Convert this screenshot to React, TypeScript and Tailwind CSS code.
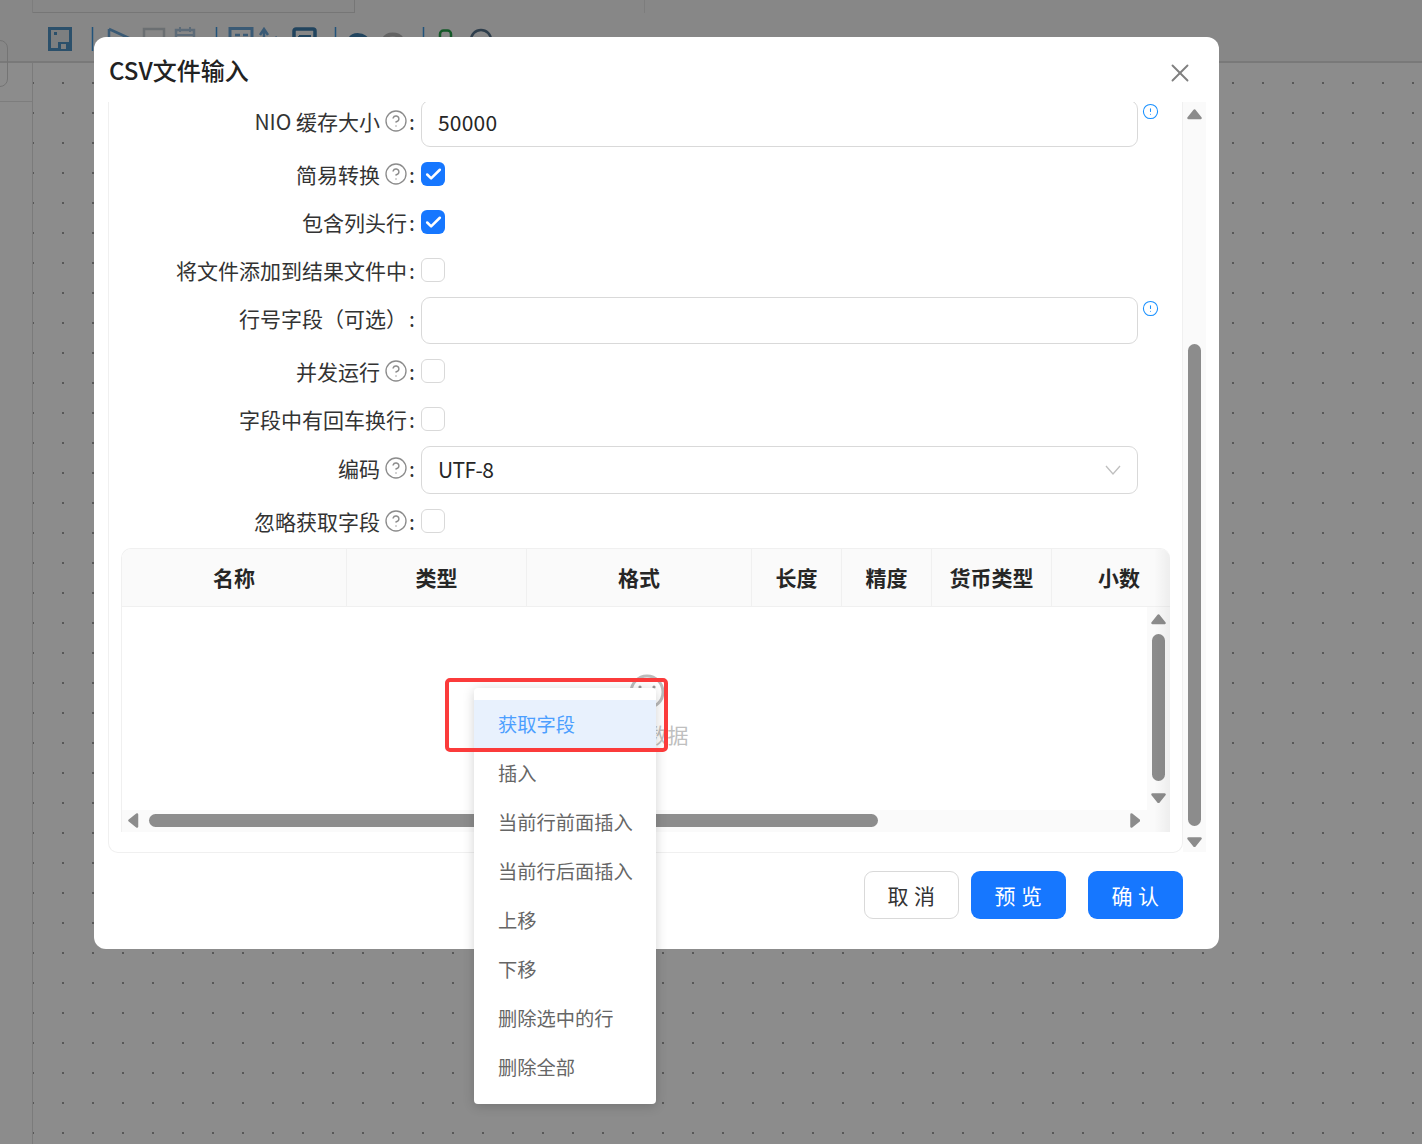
import { CircleAlert, CircleHelp, Check, X } from 'lucide-react';

const FONT = 'font-["Noto_Sans_CJK_SC","Noto_Sans",sans-serif]';

function Arrow({ dir, className }: { dir: 'up' | 'down' | 'left' | 'right'; className?: string }) {
  const pts = {
    up: '1.5,9 7.5,1.5 13.5,9',
    down: '1.5,1.5 7.5,9 13.5,1.5',
    left: '9,1.5 1.5,7.5 9,13.5',
    right: '1.5,1.5 9,7.5 1.5,13.5',
  }[dir];
  const vertical = dir === 'up' || dir === 'down';
  return (
    <svg
      viewBox={vertical ? '0 0 15 10.5' : '0 0 10.5 15'}
      className={`${vertical ? 'w-[15px] h-[10.5px]' : 'w-[10.5px] h-[15px]'} ${className ?? ''}`}
    >
      <polygon points={pts} fill="#8c8c8c" stroke="#8c8c8c" strokeWidth="2.5" strokeLinejoin="round" />
    </svg>
  );
}

function Label({ text, help, up }: { text: string; help?: boolean; up?: boolean }) {
  return (
    <div className={`w-[312px] shrink-0 flex items-center justify-end text-[21px] leading-[24px] text-[#333] whitespace-nowrap ${up ? 'pb-[5px]' : ''}`}>
      <span>{text}</span>
      {help && <CircleHelp size={24} strokeWidth={1.35} className="ml-[4px] -mr-[1px] text-[#8c8c8c]" />}
      <span className="ml-[2px] mr-[6px] w-[6px] text-center">:</span>
    </div>
  );
}

function CheckRow({ text, help, checked, mb }: { text: string; help?: boolean; checked?: boolean; mb: string }) {
  return (
    <div className={`flex items-center h-[24px] ${mb}`}>
      <Label text={text} help={help} />
      {checked ? (
        <span className="w-[24px] h-[24px] rounded-[6px] bg-[#1677ff] flex items-center justify-center">
          <Check size={19} strokeWidth={3.2} className="text-white" />
        </span>
      ) : (
        <span className="w-[24px] h-[24px] rounded-[6px] border border-[#d9d9d9] bg-white" />
      )}
    </div>
  );
}

function InputRow({ text, help, value, mb }: { text: string; help?: boolean; value?: string; mb: string }) {
  return (
    <div className={`flex items-center h-[47px] ${mb}`}>
      <Label text={text} help={help} up />
      <div className="w-[717px] h-[47px] rounded-[9px] border border-[#d9d9d9] bg-white px-[16px] pb-[1px] flex items-center text-[21px] tracking-[0.2px] text-[#262626]">
        {value}
      </div>
      <CircleAlert size={17} strokeWidth={1.5} className="ml-[4px] self-start mt-[3px] text-[#1890ff]" />
    </div>
  );
}

const columns = [
  { name: '名称', w: 'w-[225px]' },
  { name: '类型', w: 'w-[180px]' },
  { name: '格式', w: 'w-[225px]' },
  { name: '长度', w: 'w-[90px]' },
  { name: '精度', w: 'w-[90px]' },
  { name: '货币类型', w: 'w-[120px]' },
  { name: '小数', w: 'w-[135px]' },
];

const menuItems = ['插入', '当前行前面插入', '当前行后面插入', '上移', '下移', '删除选中的行', '删除全部'];

function Toolbar() {
  return (
    <div className="h-[50px] pt-[14px] pl-[48px] bg-[#f6f6f6] border-b-[2px] border-[#dcdcdc]">
      <svg viewBox="0 0 460 26" className="w-[460px] h-[26px]" fill="none">
        {/* save */}
        <rect x="1.5" y="1.5" width="21" height="21" fill="#e4e8ea" stroke="#4f92c4" strokeWidth="3" />
        <rect x="6" y="5" width="3" height="3" fill="#4f92c4" />
        <path d="M10 23v-8h11v8z" fill="#4f92c4" />
        <rect x="13" y="17" width="5" height="5" fill="#e4e8ea" />
        {/* separators */}
        <path d="M44.5 0v24M168.5 0v24M287.5 0v24M375.5 0v24" stroke="#3f97e0" strokeWidth="1.5" />
        {/* run */}
        <path d="M61 2v22M61 2l22 10" stroke="#6aa5d6" strokeWidth="2.5" />
        {/* stop */}
        <rect x="96" y="2" width="20" height="22" stroke="#c4cbd0" strokeWidth="2.5" />
        {/* calendar */}
        <rect x="128" y="3" width="18" height="20" stroke="#aac4da" strokeWidth="2.5" />
        <path d="M132 0v5M142 0v5M128 8h18" stroke="#aac4da" strokeWidth="2" />
        {/* grid tools */}
        <rect x="182" y="1.5" width="22" height="22" stroke="#6aa5d6" strokeWidth="3" />
        <path d="M187 8h5M195 8h5" stroke="#6aa5d6" strokeWidth="2.5" />
        <path d="M216 4v20M212 8l4-6 4 6M227 24v-12M224 14l5-4" stroke="#6aa5d6" strokeWidth="2.5" />
        <rect x="246" y="2" width="21" height="22" rx="2" stroke="#3d7cab" strokeWidth="3.5" />
        <path d="M251 9h11v12M256.5 9v12M251 9v12" stroke="#3d7cab" strokeWidth="2" />
        {/* undo, redo */}
        <path d="M302 12c3-5 14-6 18 2" stroke="#3d7cab" strokeWidth="4" />
        <path d="M336 12c3-6 14-6 18 0" stroke="#b4b4b4" strokeWidth="4" />
        {/* link, search */}
        <path d="M392 16V7a3.5 3.5 0 0 1 3.5-3.5h4A3.5 3.5 0 0 1 403 7v4" stroke="#27a24b" strokeWidth="2.5" />
        <circle cx="433" cy="13" r="10" stroke="#54718a" strokeWidth="2.5" />
      </svg>
    </div>
  );
}

export default function App() {
  return (
    <div className={`relative w-[1422px] h-[1144px] overflow-hidden bg-white ${FONT}`}>
      {/* page behind the dialog */}
      <div className="h-full flex flex-col">
        <div className="h-[13px] flex bg-[#f6f6f6]">
          <div className="w-[33px] border-r border-[#e4e4e4]" />
          <div className="w-[322px] border-r border-b border-[#d8d8d8]" />
          <div className="w-[290px] border-r border-[#e4e4e4]" />
        </div>
        <Toolbar />
        <div className="flex-1 flex min-h-0">
          <div className="w-[33px] shrink-0 border-r border-[#e0e0e0] bg-white">
            <div className="h-[39px] border-b border-[#e4e4e4]" />
          </div>
          <div className="flex-1 bg-white bg-[radial-gradient(circle_at_1px_1px,#a0a0a0_1px,transparent_1.5px)] bg-[size:30px_30px] bg-[position:-1px_19px]" />
        </div>
      </div>
      <div className="absolute left-[-20px] top-[40px] w-[28px] h-[47px] rounded-[8px] border border-[#d4d4d4]" />

      {/* mask */}
      <div className="absolute inset-0 bg-black/45" />

      {/* dialog */}
      <div className="absolute left-[94px] top-[37px] w-[1125px] h-[912px] rounded-[12px] bg-white flex flex-col">
        <div className="h-[65px] shrink-0 flex items-center justify-between pl-[15px] pr-[24px]">
          <span className="text-[24px] font-medium text-[#222]">CSV文件输入</span>
          <X size={30} strokeWidth={1.5} className="text-[#808080] mt-[7px]" />
        </div>

        <div className="ml-[14px] w-[1098px] h-[751px] flex overflow-hidden">
          <div className="w-[1075px] h-[751px] rounded-b-[10px] border-l border-r border-b border-[#f0f0f0] overflow-hidden">
            <div className="-mt-[2px] flex flex-col">
              <InputRow text="NIO 缓存大小" help value="50000" mb="mb-[15px]" />
              <CheckRow text="简易转换" help checked mb="mb-[24px]" />
              <CheckRow text="包含列头行" checked mb="mb-[24px]" />
              <CheckRow text="将文件添加到结果文件中" mb="mb-[15px]" />
              <InputRow text="行号字段（可选）" mb="mb-[15px]" />
              <CheckRow text="并发运行" help mb="mb-[24px]" />
              <CheckRow text="字段中有回车换行" mb="mb-[15px]" />
              <div className="flex items-center h-[48px] mb-[15px]">
                <Label text="编码" help up />
                <div className="w-[717px] h-[48px] rounded-[9px] border border-[#d9d9d9] bg-white pl-[16px] pr-[16px] flex items-center justify-between text-[21px] tracking-[-0.6px] text-[#262626]">
                  <span>UTF-8</span>
                  <svg viewBox="0 0 16 10" className="w-[16px] h-[10px]" fill="none" stroke="#bfbfbf" strokeWidth="1.3">
                    <path d="M1 1l7 8 7-8" />
                  </svg>
                </div>
              </div>
              <CheckRow text="忽略获取字段" help mb="mb-[15px]" />

              {/* table */}
              <div className="relative ml-[12px] w-[1049px] h-[284px] rounded-t-[10px] border-l border-t border-[#f0f0f0] overflow-hidden flex flex-col">
                <div className="h-[58px] shrink-0 flex bg-[#fafafa] border-b border-[#f0f0f0]">
                  {columns.map((c) => (
                    <div
                      key={c.name}
                      className={`${c.w} shrink-0 flex items-center justify-center border-r border-[#f0f0f0] text-[21px] font-bold text-[#262626]`}
                    >
                      {c.name}
                    </div>
                  ))}
                </div>
                <div className="flex-1 min-h-0 grid grid-cols-[1fr_23px] grid-rows-[1fr_22px]">
                  <div className="flex flex-col items-center pt-[67px] pl-[24px] bg-white">
                    <svg viewBox="0 0 36 36" className="w-[36px] h-[36px]" fill="none">
                      <circle cx="18" cy="18" r="16" stroke="#bbb" strokeWidth="3" />
                      <circle cx="11" cy="13" r="1.6" fill="#999" />
                      <circle cx="25" cy="13" r="1.6" fill="#999" />
                    </svg>
                    <span className="mt-[9px] text-[21px] leading-[30px] text-[#bfbfbf]">暂无数据</span>
                  </div>
                  <div className="row-span-2 bg-[#fafafa] flex flex-col items-center pt-[7px] pr-[1px]">
                    <Arrow dir="up" />
                    <div className="w-[13px] h-[147px] mt-[9px] rounded-full bg-[#8c8c8c]" />
                    <Arrow dir="down" className="mt-[12px]" />
                  </div>
                  <div className="bg-[#fafafa] flex items-center pl-[6px] pb-[2px]">
                    <Arrow dir="left" />
                    <div className="w-[729px] h-[13px] ml-[10px] rounded-full bg-[#8c8c8c]" />
                    <Arrow dir="right" className="ml-[252px]" />
                  </div>
                </div>
                <div className="absolute right-0 top-0 bottom-0 w-[16px] bg-gradient-to-l from-black/5 to-transparent" />
              </div>
            </div>
          </div>

          {/* dialog scrollbar */}
          <div className="w-[23px] h-[750px] bg-[#fafafa] flex flex-col items-center pt-[7px]">
            <Arrow dir="up" />
            <div className="w-[13px] h-[482px] mt-[224px] rounded-full bg-[#8c8c8c]" />
            <Arrow dir="down" className="mt-[11px]" />
          </div>
        </div>

        <div className="flex justify-end pt-[18px] pr-[36px] text-[21px] leading-none tracking-[0.5px]">
          <button className="w-[95px] h-[48px] rounded-[9px] border border-[#d9d9d9] bg-white text-[#333]">取 消</button>
          <button className="w-[95px] h-[48px] ml-[12px] rounded-[9px] bg-[#1677ff] text-white">预 览</button>
          <button className="w-[95px] h-[48px] ml-[22px] rounded-[9px] bg-[#1677ff] text-white">确 认</button>
        </div>
      </div>

      {/* context menu */}
      <div className="absolute left-[474px] top-[688px] w-[182px] h-[416px] pt-[12px] rounded-[4px] bg-white shadow-[0_2px_12px_rgba(0,0,0,0.18)] text-[19.25px] text-[#666]">
        <div className="h-[49px] pl-[24px] flex items-center bg-[#e8f1fd] text-[#4c9fff]">获取字段</div>
        {menuItems.map((item) => (
          <div key={item} className="h-[49px] pl-[24px] flex items-center whitespace-nowrap">
            {item}
          </div>
        ))}
      </div>

      {/* red annotation */}
      <div className="absolute left-[445px] top-[678px] w-[223px] h-[74px] rounded-[5px] border-[4px] border-[#fb3b3b]" />
    </div>
  );
}
